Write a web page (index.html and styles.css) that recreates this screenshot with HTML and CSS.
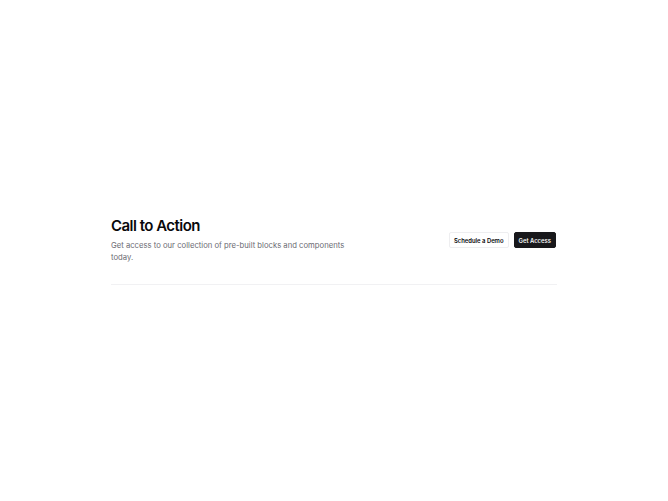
FILE: index.html
```html
<!DOCTYPE html>
<html>
<head>
<meta charset="utf-8">
<link rel="stylesheet" href="styles.css">
</head>
<body>
<main class="page">
  <section class="cta">
    <div class="cta-row">
      <div class="cta-text">
        <h1 class="cta-title">Call to Action</h1>
        <p class="cta-desc">Get access to our collection of pre-built blocks and components today.</p>
      </div>
      <div class="cta-actions">
        <button class="btn btn-outline">Schedule a Demo</button>
        <button class="btn btn-solid">Get Access</button>
      </div>
    </div>
  </section>
</main>
</body>
</html>
```
FILE: styles.css
```css
html, body {
  margin: 0;
  padding: 0;
  background: #ffffff;
}
body {
  font-family: Inter, "Liberation Sans", sans-serif;
  color: #09090b;
}
.page {
  height: 501px;
  display: flex;
  align-items: center;
  justify-content: center;
}
.cta {
  width: 446px;
  border-bottom: 1px solid #f1f1f3;
  padding-bottom: 20px;
}
.cta-row {
  display: flex;
  align-items: center;
  justify-content: space-between;
}
.cta-text {
  display: flex;
  flex-direction: column;
  gap: 4px;
}
.cta-title {
  margin: 0;
  font-size: 15px;
  line-height: 20px;
  font-weight: 600;
  letter-spacing: -0.035em;
}
.cta-desc {
  margin: 0;
  max-width: 245px;
  font-size: 7.7px;
  line-height: 12px;
  color: #6b6b73;
}
.cta-actions {
  display: flex;
  gap: 5px;
  align-items: center;
  margin-right: 1px;
}
.btn {
  height: 16px;
  padding: 0 4px;
  font-family: Inter, "Liberation Sans", sans-serif;
  font-size: 5.9px;
  font-weight: 600;
  border-radius: 2px;
  cursor: pointer;
}
.btn-outline {
  background: #ffffff;
  color: #09090b;
  border: 1px solid #eeeef0;
}
.btn-solid {
  background: #18181b;
  color: #fafafa;
  border: 1px solid #18181b;
}
```
